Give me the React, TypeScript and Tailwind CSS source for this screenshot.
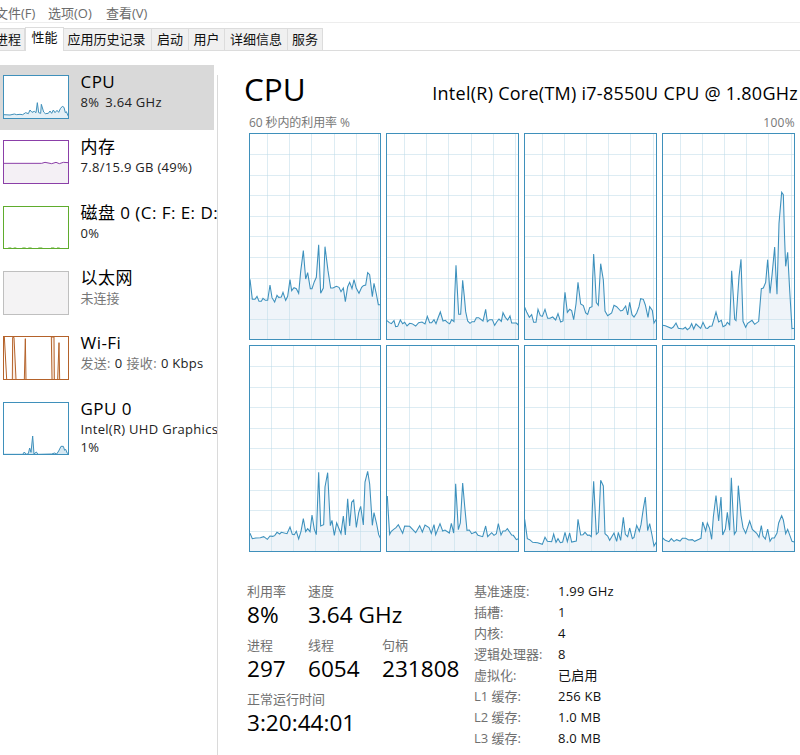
import React from "react";

type Core = { w: number; ox: number; gx: number; pts: string };

// Core curves are stored at three units per pixel; ox is the left edge of each curve's frame.
const cores: Core[] = [
  { w: 132, ox: 15, gx: 70, pts: "18,448 25,508 33,508 39,499 45,514 52,514 57,505 64,511 71,511 78,465 84,503 92,516 99,496 104,502 112,501 117,487 125,511 131,499 138,449 143,482 150,473 157,476 164,490 170,425 178,362 185,447 191,428 199,476 204,476 211,455 217,442 224,344 230,490 238,474 243,350 252,422 260,474 267,474 277,469 285,472 291,485 298,474 304,515 311,470 317,457 324,476 330,449 337,475 345,490 353,472 358,467 365,465 371,428 377,434 385,500 390,460 397,492 403,524 410,524" },
  { w: 133, ox: 12, gx: 67, pts: "15,572 22,578 28,581 36,572 41,590 47,589 55,570 62,581 68,577 75,588 83,580 90,581 101,588 110,578 120,576 129,582 136,559 143,578 149,578 156,569 162,581 168,564 175,546 183,573 190,571 197,578 203,581 209,569 216,575 218,500 222,406 226,480 230,553 236,553 242,451 247,500 251,545 257,573 264,580 270,575 277,575 283,563 290,563 303,573 311,538 316,575 323,569 331,569 338,586 344,576 351,567 358,574 363,548 370,562 377,570 384,558 389,579 397,579 403,579 409,585" },
  { w: 133, ox: 12, gx: 66, pts: "14,532 20,546 28,562 35,554 41,577 48,577 54,538 61,557 67,559 75,538 83,565 90,565 98,561 107,570 114,551 122,576 129,573 132,520 135,487 142,547 149,538 155,542 161,569 168,522 174,457 182,522 190,527 197,549 203,553 209,533 216,530 218,445 221,372 225,440 229,518 235,526 242,401 250,450 255,543 263,557 275,549 282,526 290,530 302,543 308,541 317,528 323,555 329,517 336,554 342,561 350,549 357,530 362,506 370,508 376,525 384,562 389,530 397,541 402,579 409,568" },
  { w: 133, ox: 12, gx: 66, pts: "14,586 22,587 40,595 46,591 54,579 61,595 75,597 82,592 88,599 95,594 101,581 107,597 114,582 128,595 135,577 143,594 149,595 155,589 162,588 168,568 174,546 182,576 190,571 195,590 203,586 208,577 215,584 218,505 221,422 226,500 230,568 234,572 243,440 249,388 255,574 263,592 269,580 282,571 290,583 302,574 310,476 316,474 323,457 329,389 336,490 342,436 350,351 353,420 357,493 363,280 371,187 376,194 380,330 383,409 389,367 395,480 402,596 409,595" },
  { w: 132, ox: 15, gx: 82, pts: "18,574 25,590 35,588 49,587 59,584 70,592 78,582 86,583 92,581 99,571 107,576 112,571 129,575 138,555 145,577 151,578 157,568 164,591 171,568 178,530 185,569 191,560 198,569 204,519 211,562 217,578 220,500 224,391 230,552 239,548 243,435 251,392 259,551 264,535 271,580 278,543 291,575 298,522 304,579 311,470 317,552 323,481 329,474 337,556 344,512 350,493 358,549 363,420 371,388 377,426 385,550 390,512 398,546 404,578 410,590" },
  { w: 133, ox: 426, gx: 497, pts: "430,462 433,515 437,577 442,568 449,562 456,557 463,548 476,574 482,552 497,553 515,572 527,551 535,570 543,549 555,557 562,574 570,548 575,578 588,545 596,567 603,564 616,573 622,544 629,573 632,520 635,425 643,563 649,543 656,423 662,492 669,565 676,564 683,575 695,570 702,580 716,584 725,552 731,584 743,572 750,580 757,575 763,545 771,579 777,567 784,567 790,560 803,579 808,580 817,593 823,590" },
  { w: 133, ox: 12, gx: 82, pts: "14,532 22,590 29,593 38,601 53,602 67,607 75,586 82,598 95,599 101,576 108,601 114,590 121,602 128,600 135,571 142,599 149,573 155,600 169,597 174,532 182,579 189,578 195,571 203,580 208,579 214,584 217,500 221,418 229,577 235,571 242,415 250,432 255,575 263,582 269,595 282,573 290,598 295,571 302,595 310,526 316,577 323,584 329,558 337,590 342,586 350,550 358,568 363,548 370,500 376,465 383,566 389,545 396,579 402,612 409,600" },
  { w: 133, ox: 426, gx: 496, pts: "428,588 436,595 447,599 454,590 462,598 470,593 480,597 487,589 497,589 506,594 517,593 524,598 537,592 543,589 548,540 557,567 562,543 569,560 575,592 580,525 588,461 596,537 603,465 608,579 616,561 622,511 629,565 632,460 634,407 639,510 643,577 649,567 655,431 663,520 669,557 677,574 689,537 697,562 710,574 717,586 724,551 729,582 736,591 743,561 750,598 756,588 763,588 771,573 776,543 785,521 790,534 797,575 803,562 816,598 823,600" },
];

const fillTo = (pts: string, bottom: number) => {
  const list = pts.split(" ");
  const first = list[0].split(",")[0];
  const last = list[list.length - 1].split(",")[0];
  return `${first},${bottom} ${pts} ${last},${bottom}`;
};

const CoreChart = ({ core }: { core: Core }) => (
  <svg width={core.w} height={207} viewBox={`${core.ox} 9 ${core.w * 3} 621`} className="block shrink-0">
    <polygon points={fillTo(core.pts, 627)} fill="#eff4f9" />
    {[0, 1, 2, 3, 4, 5].map((i) => {
      const x = Math.floor((core.gx + i * 66.7 - core.ox) / 3) * 3 + core.ox + 1.5;
      return x < core.ox + core.w * 3 - 3 ? (
        <line key={i} x1={x} x2={x} y1={12} y2={627} stroke="#bcd9e8" strokeOpacity={0.5} strokeWidth={3} />
      ) : null;
    })}
    {[73, 135, 196, 258, 319, 382, 444, 505, 567].map((y) => {
      const row = Math.floor(y / 3) * 3 + 1.5;
      return <line key={y} x1={core.ox} x2={core.ox + core.w * 3} y1={row} y2={row} stroke="#bcd9e8" strokeOpacity={0.5} strokeWidth={3} />;
    })}
    <polyline points={core.pts} fill="none" stroke="#3d91bd" strokeWidth={3.2} />
    <rect x={core.ox + 1.5} y={10.5} width={core.w * 3 - 3} height={618} fill="none" stroke="#3f90bb" strokeWidth={3} />
  </svg>
);

const Thumb = ({ y, h, color, bg = "#fff", children }: { y: number; h: number; color: string; bg?: string; children?: React.ReactNode }) => (
  <svg width={66} height={h} viewBox={`9 ${y} 198 ${h * 3}`} className="mt-2.5 block shrink-0">
    <rect x={10.5} y={y + 1.5} width={195} height={h * 3 - 3} fill={bg} />
    {children}
    <rect x={10.5} y={y + 1.5} width={195} height={h * 3 - 3} fill="none" stroke={color} strokeWidth={3} />
  </svg>
);

const cpuPts = "11,344 30,345 43,342 50,344 60,343 68,344 77,338 85,341 90,330 96,337 103,334 108,338 112,308 116,338 122,340 124,313 131,336 136,341 145,340 150,333 155,340 160,330 165,338 171,331 176,337 181,326 187,319 192,322 196,338 199,335 205,349";
const gpuPts = "11,403 68,403 73,396 78,403 85,401 89,384 93,397 98,348 102,402 109,396 114,403 155,402 164,399 170,402 176,393 183,379 190,379 194,391 197,388 202,400 206,402";

const Item = ({ title, thumb, children, h = "h-[65px]", active = false }: { title: string; thumb: React.ReactNode; children: React.ReactNode; h?: string; active?: boolean }) => (
  <div className={`flex pl-[3px] ${h} ${active ? "mr-[3px] bg-[#d9d9d9]" : ""}`}>
    {thumb}
    <div className="ml-[11.5px] min-w-0 pt-[5px] whitespace-nowrap">
      <div className="h-[23px] text-[17px] leading-[23px] tracking-[0.45px] text-black">{title}</div>
      <div className="text-[13px] leading-[18px] tracking-[0.3px] text-[#222]">{children}</div>
    </div>
  </div>
);

const Stat = ({ label, value, w = "" }: { label: string; value: string; w?: string }) => (
  <div className={w}>
    <div className="h-5 text-[13px] leading-5 text-[#707070]">{label}</div>
    <div className="h-[26px] text-[22.6px] leading-[28px] text-black">{value}</div>
  </div>
);

const tabs = [
  { t: "进程", c: "w-[25px] justify-end pr-[3px]" },
  { t: "性能", c: "w-[39px]" },
  { t: "应用历史记录", c: "w-[88px] pr-0.5" },
  { t: "启动", c: "w-[37px]" },
  { t: "用户", c: "w-9" },
  { t: "详细信息", c: "w-[63px]" },
  { t: "服务", c: "w-[35px]" },
];

const details = [
  ["基准速度:", "1.99 GHz"],
  ["插槽:", "1"],
  ["内核:", "4"],
  ["逻辑处理器:", "8"],
  ["虚拟化:", "已启用"],
  ["L1 缓存:", "256 KB"],
  ["L2 缓存:", "1.0 MB"],
  ["L3 缓存:", "8.0 MB"],
];

export default function App() {
  return (
    <div className="flex h-[755px] w-[800px] flex-col overflow-hidden bg-white font-['Open_Sans','Noto_Sans_CJK_SC',sans-serif] whitespace-nowrap">
      <div className="flex h-[23px] shrink-0 border-b border-[#ededed] pt-1 text-[13px] leading-[18px] text-[#6b6b6b]">
        <div className="-ml-[5px] w-[53px]">文件(F)</div>
        <div className="w-[58px]">选项(O)</div>
        <div>查看(V)</div>
      </div>
      <div className="flex h-7 shrink-0 items-end border-b border-[#dcdcdc] text-[13px] text-[#111]">
        {tabs.map((tab, i) =>
          i === 1 ? (
            <div key={tab.t} className={`-mb-px flex h-6 items-center justify-center border-x border-t border-[#dcdcdc] bg-white pb-[3px] ${tab.c}`}>
              {tab.t}
            </div>
          ) : (
            <div key={tab.t} className={`flex h-[22px] items-center justify-center border-t border-r border-[#dcdcdc] bg-[#f0f0f0] ${tab.c}`}>
              {tab.t}
            </div>
          )
        )}
      </div>
      <div className="flex min-h-0 grow">
        <div className="flex w-[218px] shrink-0 flex-col overflow-hidden pt-3.5 pr-px">
          <Item title="CPU" active thumb={
            <Thumb y={225} h={44} color="#3f90bb">
              <polygon points={fillTo(cpuPts, 354)} fill="#e4f0f7" />
              <polyline points={cpuPts} fill="none" stroke="#3f90bb" strokeWidth={3} />
            </Thumb>
          }>8%<span className="ml-1.5">3.64 GHz</span></Item>
          <Item title="内存" h="h-[66px]" thumb={
            <Thumb y={30} h={44} color="#8b3fa8">
              <polygon points="11,100 125,100 135,97 155,101 168,97 178,101 190,97 205,98 205,160 11,160" fill="#f4f0f5" />
              <polyline points="11,100 125,100 135,97 155,101 168,97 178,101 190,97 205,98" fill="none" stroke="#8b3fa8" strokeWidth={3} />
            </Thumb>
          }>7.8/15.9 GB (49%)</Item>
          <Item title="磁盘 0 (C: F: E: D:)" thumb={
            <Thumb y={228} h={43} color="#5fac2d">
              <path d="M25 354h9m7 0h8m18 0h10m8 0h10m20 0h12m26 0h10m8 0h8" stroke="#5fac2d" strokeWidth={3} />
            </Thumb>
          }>0%</Item>
          <Item title="以太网" thumb={<Thumb y={0} h={44} color="#bfbfbf" bg="#f4f3f4" />}>
            <span className="tracking-normal text-[#777]">未连接</span>
          </Item>
          <Item title="Wi-Fi" h="h-[66px]" thumb={
            <Thumb y={48} h={44} color="#b4622a">
              <g fill="#faede3" stroke="#b4622a" strokeWidth={3}>
                <path d="M11 50L13 50L20 178M37 178L38 52H42L48 178M73 178L76 56L78 178M156 178L154 51H162L163 178M173 178L177 68L179 178" />
              </g>
            </Thumb>
          }>
            <span className="text-[#777]">发送:</span><span className="mx-1">0</span><span className="text-[#777]">接收:</span><span className="ml-1">0 Kbps</span>
          </Item>
          <Item title="GPU 0" thumb={
            <Thumb y={246} h={53} color="#3f90bb">
              <polygon points={fillTo(gpuPts, 403)} fill="#d6e8f2" />
              <polyline points={gpuPts} fill="none" stroke="#3f90bb" strokeWidth={3} />
            </Thumb>
          }>Intel(R) UHD Graphics<br />1%</Item>
        </div>
        <div className="-ml-px mt-6 w-px shrink-0 bg-[#dadada]" />
        <div className="flex min-w-0 grow flex-col pt-[15px] pl-[31px]">
          <div className="flex h-[47px] items-start justify-between pr-0.5 text-black">
            <div className="-ml-[5px] text-[31.5px] leading-[45px]">CPU</div>
            <div className="pt-[14px] text-[18px] leading-[26px] tracking-[0.26px]">Intel(R) Core(TM) i7-8550U CPU @ 1.80GHz</div>
          </div>
          <div className="flex h-5 justify-between pr-[5px] text-[12px] leading-5 text-[#777]">
            <span className="tracking-[-0.1px]">60 秒内的利用率 %</span>
            <span className="tracking-[0.3px]">100%</span>
          </div>
          <div className="flex flex-col gap-[5px]">
            <div className="flex gap-[5px]">{cores.slice(0, 4).map((c, i) => <CoreChart key={i} core={c} />)}</div>
            <div className="flex gap-[5px]">{cores.slice(4).map((c, i) => <CoreChart key={i} core={c} />)}</div>
          </div>
          <div className="-ml-0.5 flex pt-[29px]">
            <div className="flex w-[227px] shrink-0 flex-col gap-2">
              <div className="flex">
                <Stat label="利用率" value="8%" w="w-[61px]" />
                <Stat label="速度" value="3.64 GHz" />
              </div>
              <div className="flex">
                <Stat label="进程" value="297" w="w-[61px]" />
                <Stat label="线程" value="6054" w="w-[74px]" />
                <Stat label="句柄" value="231808" />
              </div>
              <Stat label="正常运行时间" value="3:20:44:01" />
            </div>
            <div className="text-[13px] leading-[21px]">
              {details.map(([k, v]) => (
                <div key={k} className="flex h-[21px]">
                  <div className="w-[84px] text-[#707070]">{k}</div>
                  <div className="tracking-[0.2px] text-[#111]">{v}</div>
                </div>
              ))}
            </div>
          </div>
        </div>
      </div>
    </div>
  );
}
